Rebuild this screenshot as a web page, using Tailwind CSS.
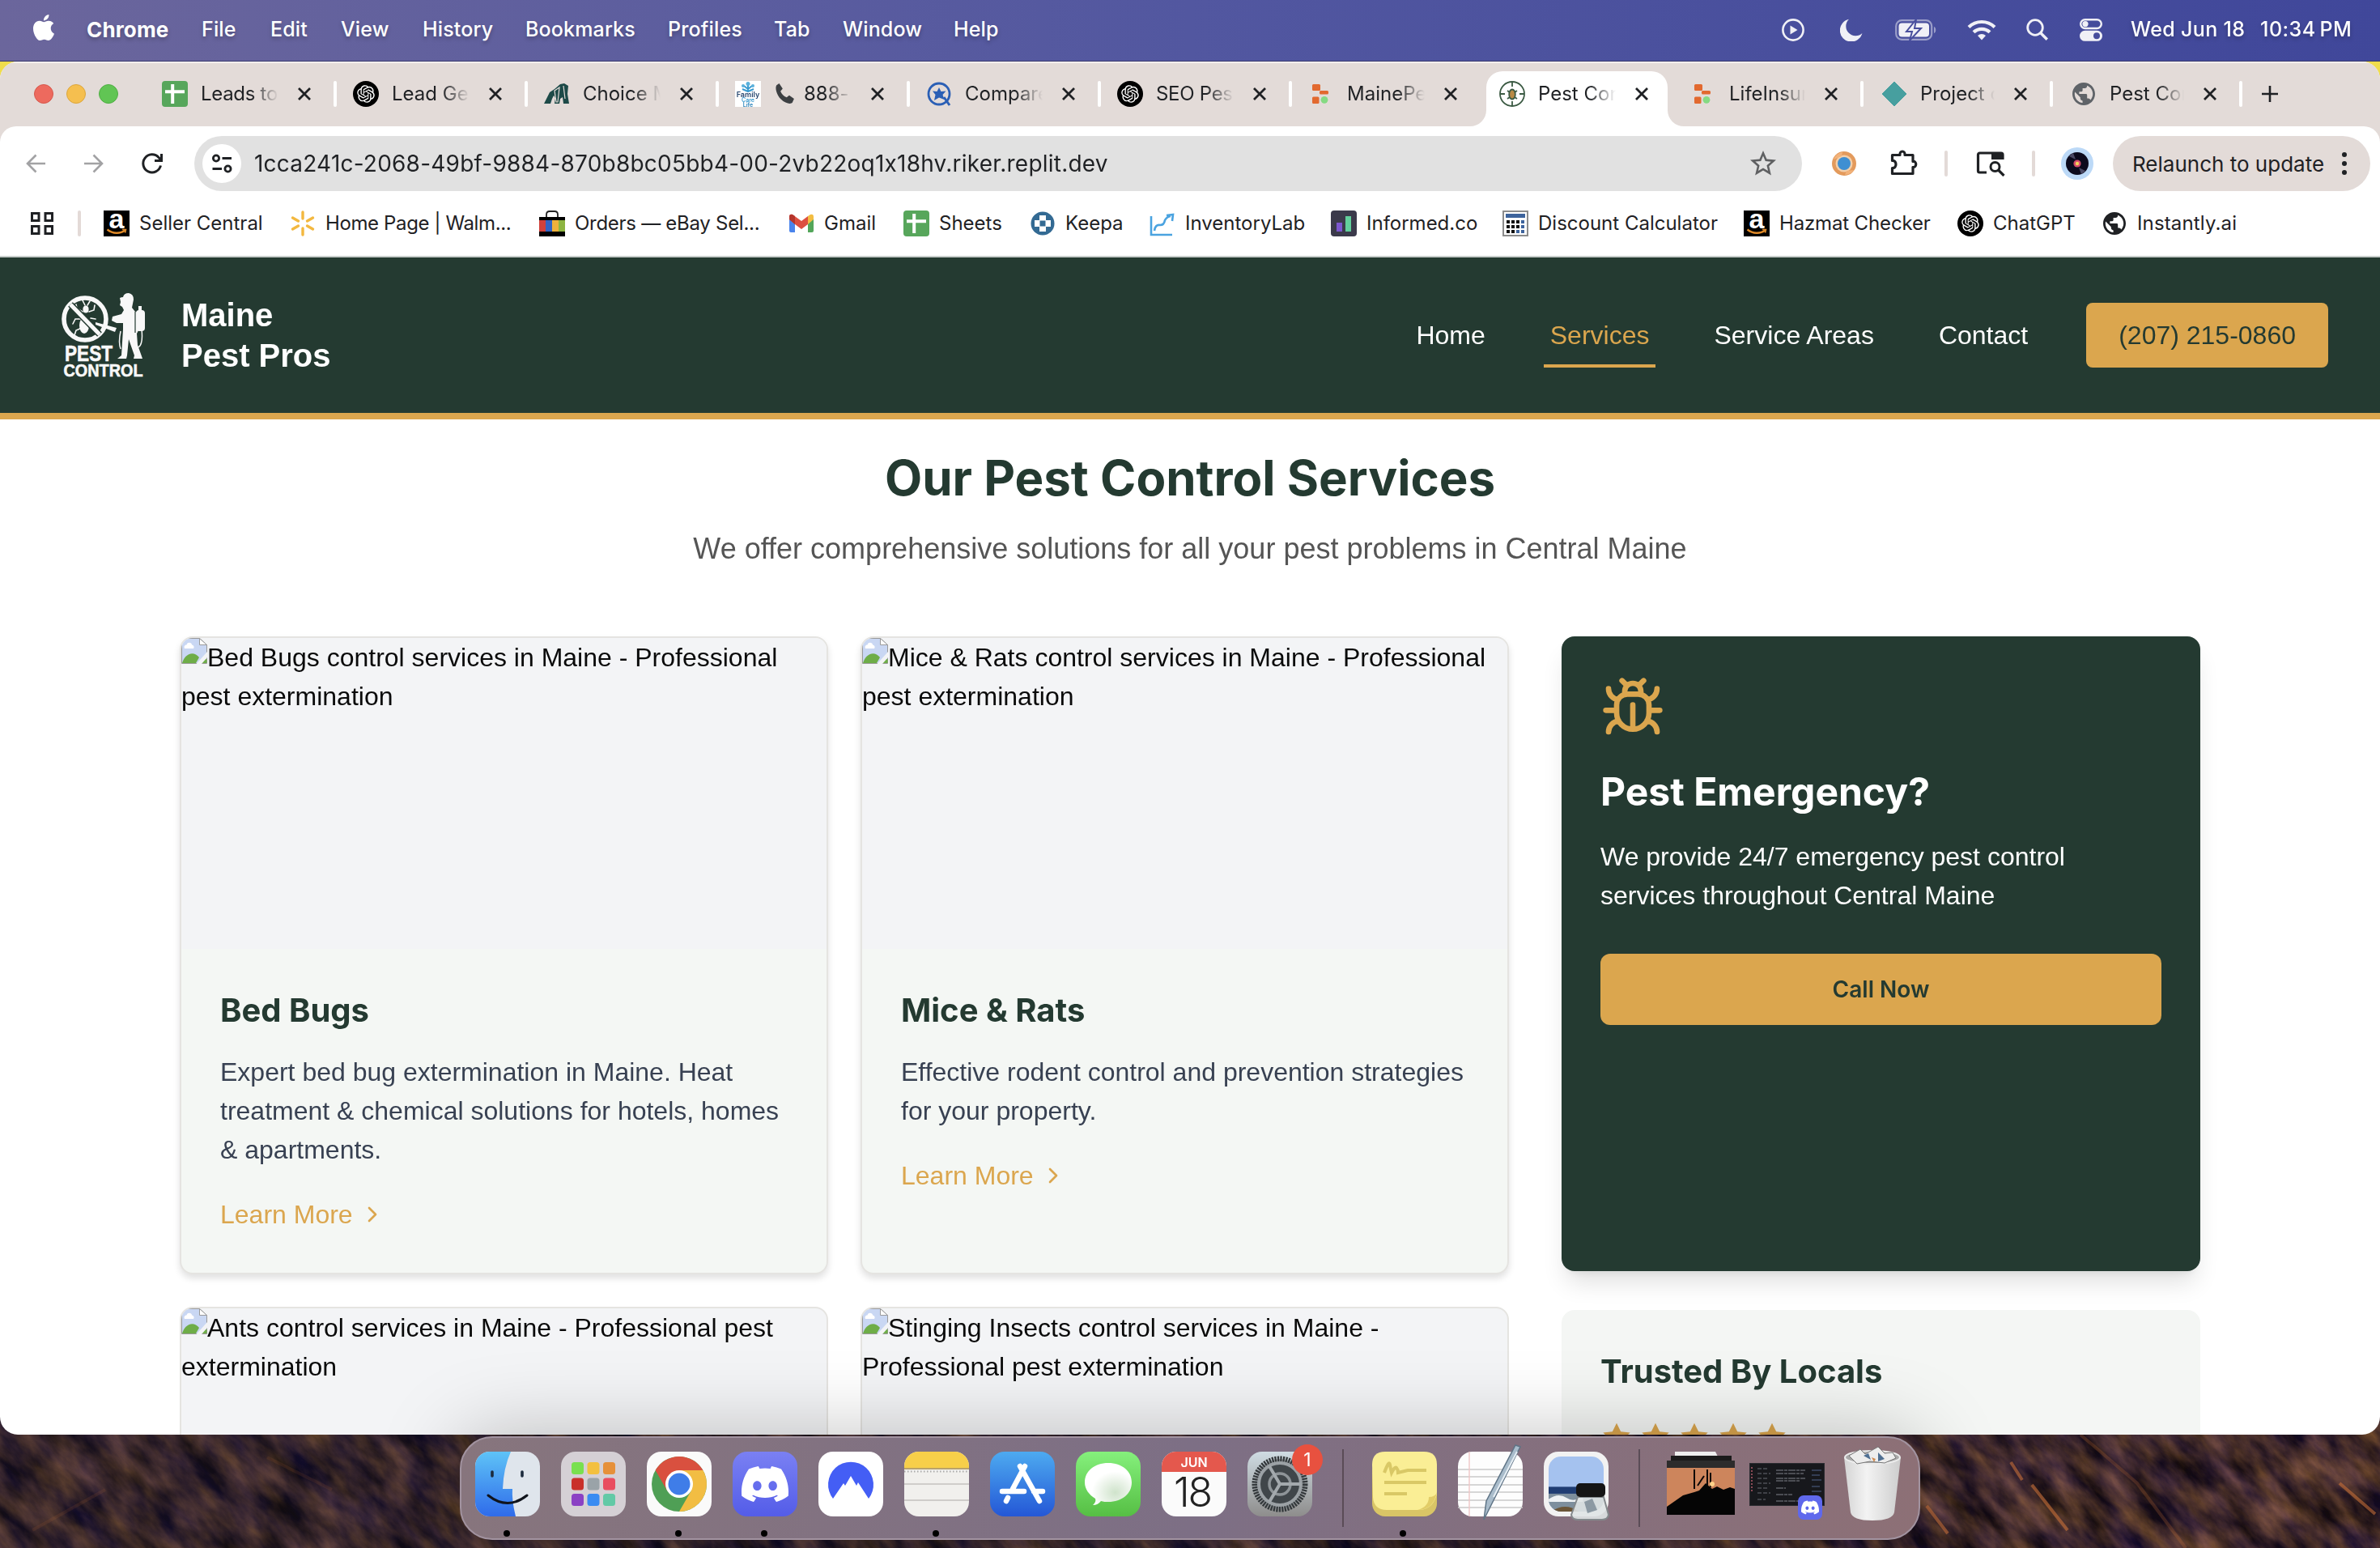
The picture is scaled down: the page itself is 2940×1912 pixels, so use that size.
<!DOCTYPE html>
<html lang="en">
<head>
<meta charset="utf-8">
<title>Maine Pest Pros</title>
<script src="https://cdn.jsdelivr.net/npm/@tailwindcss/browser@4"></script>
</head>
<body class="w-[2940px] h-[1912px] overflow-hidden bg-[#33262b] font-[Inter,sans-serif] text-[#1f2124] [font-feature-settings:'calt'_0]">

<!-- Shared icon symbols -->
<svg class="hidden">
  <symbol id="openai" viewBox="0 0 32 32"><circle cx="16" cy="16" r="16" fill="#000"/><path transform="translate(5.2 5.2) scale(.9)" fill="#fff" d="M22.2819 9.8211a5.9847 5.9847 0 0 0-.5157-4.9108 6.0462 6.0462 0 0 0-6.5098-2.9A6.0651 6.0651 0 0 0 4.9807 4.1818a5.9847 5.9847 0 0 0-3.9977 2.9 6.0462 6.0462 0 0 0 .7427 7.0966 5.98 5.98 0 0 0 .511 4.9107 6.051 6.051 0 0 0 6.5146 2.9001A5.9847 5.9847 0 0 0 13.2599 24a6.0557 6.0557 0 0 0 5.7718-4.2058 5.9894 5.9894 0 0 0 3.9977-2.9001 6.0557 6.0557 0 0 0-.7475-7.0729zm-9.022 12.6081a4.4755 4.4755 0 0 1-2.8764-1.0408l.1419-.0804 4.7783-2.7582a.7948.7948 0 0 0 .3927-.6813v-6.7369l2.02 1.1686a.071.071 0 0 1 .038.052v5.5826a4.504 4.504 0 0 1-4.4945 4.4944zm-9.6607-4.1254a4.4708 4.4708 0 0 1-.5346-3.0137l.142.0852 4.783 2.7582a.7712.7712 0 0 0 .7806 0l5.8428-3.3685v2.3324a.0804.0804 0 0 1-.0332.0615L9.74 19.9502a4.4992 4.4992 0 0 1-6.1408-1.6464zM2.3408 7.8956a4.485 4.485 0 0 1 2.3655-1.9728V11.6a.7664.7664 0 0 0 .3879.6765l5.8144 3.3543-2.0201 1.1685a.0757.0757 0 0 1-.071 0l-4.8303-2.7865A4.504 4.504 0 0 1 2.3408 7.872zm16.5963 3.8558L13.1038 8.364 15.1192 7.2a.0757.0757 0 0 1 .071 0l4.8303 2.7913a4.4944 4.4944 0 0 1-.6765 8.1042v-5.6772a.79.79 0 0 0-.407-.667zm2.0107-3.0231l-.142-.0852-4.7735-2.7818a.7759.7759 0 0 0-.7854 0L9.409 9.2297V6.8974a.0662.0662 0 0 1 .0284-.0615l4.8303-2.7866a4.4992 4.4992 0 0 1 6.6802 4.66zM8.3065 12.863l-2.02-1.1638a.0804.0804 0 0 1-.038-.0567V6.0742a4.4992 4.4992 0 0 1 7.3757-3.4537l-.142.0805L8.704 5.459a.7948.7948 0 0 0-.3927.6813zm1.0976-2.3654l2.602-1.4998 2.6069 1.4998v2.9994l-2.5974 1.4997-2.6067-1.4997Z"/></symbol>
  <symbol id="sheets" viewBox="0 0 32 32"><rect width="32" height="32" rx="4" fill="#57a65b"/><path d="M13.2 4v24M4 13.2h24" stroke="#fff" stroke-width="4"/></symbol>
  <symbol id="globe" viewBox="2 2 20 20"><path fill="currentColor" d="M12 2C6.48 2 2 6.48 2 12s4.48 10 10 10 10-4.48 10-10S17.52 2 12 2zm-1 17.93c-3.95-.49-7-3.85-7-7.93 0-.62.08-1.21.21-1.79L9 15v1c0 1.1.9 2 2 2v1.93zm6.9-2.54c-.26-.81-1-1.39-1.9-1.39h-1v-3c0-.55-.45-1-1-1H8v-2h2c.55 0 1-.45 1-1V7h2c1.1 0 2-.9 2-2v-.41c2.93 1.19 5 4.06 5 7.41 0 2.08-.8 3.97-2.1 5.39z"/></symbol>
  <symbol id="blocks" viewBox="0 0 32 32"><rect x="5" y="4" width="10" height="8" rx="1.5" fill="#e2692f"/><rect x="14" y="12" width="11" height="4.500" rx="1.500" fill="#e2692f"/><rect x="5" y="19.500" width="8.500" height="8.500" rx="1.500" fill="#e2692f"/><circle cx="20" cy="23.300" r="4.400" fill="#85da83"/></symbol>
  <symbol id="close" viewBox="0 0 20 20"><path d="M3 3l14 14M17 3L3 17" stroke="#1f2124" stroke-width="2.800" fill="none"/></symbol>
  <symbol id="amazon" viewBox="0 0 32 32"><rect width="32" height="32" fill="#000"/><text x="16" y="22" text-anchor="middle" font-family="Liberation Sans" font-weight="700" font-size="34" fill="#fff">a</text><path d="M4.500 23.500c7 5.600 16 5.600 22 .8" stroke="#e08a28" stroke-width="2.400" fill="none"/><path d="M23 23.500h4.500l-1 4" stroke="#e08a28" stroke-width="1.600" fill="none"/></symbol>
  <symbol id="discord" viewBox="0 0 24 24"><path fill="#fff" d="M20.317 4.3698a19.7913 19.7913 0 00-4.8851-1.5152.0741.0741 0 00-.0785.0371c-.211.3753-.4447.8648-.6083 1.2495-1.8447-.2762-3.68-.2762-5.4868 0-.1636-.3933-.4058-.8742-.6177-1.2495a.077.077 0 00-.0785-.037 19.7363 19.7363 0 00-4.8852 1.515.0699.0699 0 00-.0321.0277C.5334 9.0458-.319 13.5799.0992 18.0578a.0824.0824 0 00.0312.0561c2.0528 1.5076 4.0413 2.4228 5.9929 3.0294a.0777.0777 0 00.0842-.0276c.4616-.6304.8731-1.2952 1.226-1.9942a.076.076 0 00-.0416-.1057c-.6528-.2476-1.2743-.5495-1.8722-.8923a.077.077 0 01-.0076-.1277c.1258-.0943.2517-.1923.3718-.2914a.0743.0743 0 01.0776-.0105c3.9278 1.7933 8.18 1.7933 12.0614 0a.0739.0739 0 01.0785.0095c.1202.099.246.1981.3728.2924a.077.077 0 01-.0066.1276 12.2986 12.2986 0 01-1.873.8914.0766.0766 0 00-.0407.1067c.3604.698.7719 1.3628 1.225 1.9932a.076.076 0 00.0842.0286c1.961-.6067 3.9495-1.5219 6.0023-3.0294a.077.077 0 00.0313-.0552c.5004-5.177-.8382-9.6739-3.5485-13.6604a.061.061 0 00-.0312-.0286zM8.02 15.3312c-1.1825 0-2.1569-1.0857-2.1569-2.419 0-1.3332.9555-2.4189 2.157-2.4189 1.2108 0 2.1757 1.0952 2.1568 2.419 0 1.3332-.9555 2.4189-2.1569 2.4189zm7.9748 0c-1.1825 0-2.1569-1.0857-2.1569-2.419 0-1.3332.9554-2.4189 2.1569-2.4189 1.2108 0 2.1757 1.0952 2.1568 2.419 0 1.3332-.946 2.4189-2.1568 2.4189Z"/></symbol>
  <symbol id="broken" viewBox="0 0 32 32"><path d="M.5 .5H22.500l9 8V31.500H.5z" fill="#c9d7f3" stroke="#9a9a9a"/><path d="M22.500 .5v8h9z" fill="#fff" stroke="#9a9a9a"/><path d="M4 13c-1.500-3.500 1.500-5 2.500-4.500 1-4 6.500-3 6.500 0 3 .5 3 3.500 2 4.500z" fill="#fff"/><path d="M1 31c4-13 15-15 21-7l-4 7z" fill="#6ead48"/><path d="M24 31l6-6 1.500 2V31z" fill="#6ead48"/><path d="M18.500 32L32 17v7l-7 8z" fill="#f3f4f6"/></symbol>
  <symbol id="star" viewBox="0 0 24 24"><polygon points="12 2.300 15.090 8.560 22 9.270 17 14.140 18.180 21.020 12 17.770 5.820 21.020 7 14.140 2 9.270 8.910 8.560" fill="#dba64e"/></symbol>
</svg>

<!-- Wallpaper -->
<svg class="absolute left-0 top-0" width="2940" height="1912">
  <defs>
    <filter id="city" x="0" y="0" width="100%" height="100%" color-interpolation-filters="sRGB"><feTurbulence type="fractalNoise" baseFrequency=".032 .02" numOctaves="6" seed="11"/><feColorMatrix values=".8 0 0 0 -.17  .55 0 0 0 -.12  .25 0 .25 0 -.08  0 0 0 0 1"/></filter>
    <linearGradient id="wl" x1="0" x2="1"><stop offset="0" stop-color="#2e2026" stop-opacity=".4"/><stop offset=".5" stop-color="#261d2c" stop-opacity=".3"/><stop offset="1" stop-color="#5a3025" stop-opacity=".2"/></linearGradient>
  </defs>
  <rect width="2940" height="200" fill="#efdc4c"/>
  <g transform="translate(0 1740)">
    <g transform="skewX(35)"><rect x="-200" width="3300" height="180" filter="url(#city)"/></g>
    <rect width="2940" height="180" fill="url(#wl)"/>
    <g stroke="#c8713a" stroke-width="4" opacity=".6"><path d="M2380 120l26 34M2510 94l44 56M2484 66l14 22M2890 92l44 38"/><path d="M2570 32l70 60 60 80" opacity=".4" fill="none"/><path d="M40 150l90-50M330 60l80 40" opacity=".2"/></g>
  </g>
</svg>

<div class="relative flex flex-col w-[2940px]">
  <!-- Menu bar -->
  <div class="h-[76px] flex items-center justify-between bg-linear-to-r from-[#6b669c] via-[#5257a0] to-[#40479a] border-b border-[#393a6e] text-white text-[25px] tracking-[.15px] whitespace-nowrap font-medium pl-10 pr-[34px] [text-shadow:0_3px_5px_rgba(0,0,0,.25)]">
    <div class="flex items-center pb-0.5">
      <svg class="w-[28px] h-[32px] mr-[39px] mb-1.5" viewBox="2 0 20 24"><path fill="#fff" d="M12.152 6.896c-.948 0-2.415-1.078-3.96-1.04-2.040.027-3.910 1.183-4.961 3.014-2.117 3.675-.546 9.103 1.519 12.090 1.013 1.454 2.208 3.090 3.792 3.039 1.520-.065 2.090-.987 3.935-.987 1.831 0 2.350.987 3.960.948 1.637-.026 2.676-1.480 3.676-2.948 1.156-1.688 1.636-3.325 1.662-3.415-.039-.013-3.182-1.221-3.220-4.857-.026-3.040 2.480-4.494 2.597-4.559-1.429-2.090-3.623-2.324-4.390-2.376-2-.156-3.675 1.090-4.610 1.090zM15.530 3.830c.843-1.012 1.400-2.427 1.245-3.830-1.207.052-2.662.805-3.532 1.818-.780.896-1.454 2.338-1.273 3.714 1.338.104 2.715-.688 3.559-1.701"/></svg>
      <div class="w-[142px] text-[26px] font-bold">Chrome</div>
      <div class="w-[85px]">File</div>
      <div class="w-[87px]">Edit</div>
      <div class="w-[101px]">View</div>
      <div class="w-[127px]">History</div>
      <div class="w-[176px]">Bookmarks</div>
      <div class="w-[131px]">Profiles</div>
      <div class="w-[85px]">Tab</div>
      <div class="w-[137px]">Window</div>
      <div>Help</div>
    </div>
    <div class="flex items-center pb-0.5">
      <svg class="w-[28px] h-[28px] mr-[44px]" viewBox="0 0 28 28"><circle cx="14" cy="14" r="12.600" fill="none" stroke="#f0f0f6" stroke-width="2.600"/><path d="M10.500 8.500l9 5.500-9 5.500z" fill="#f0f0f6"/></svg>
      <svg class="w-[28px] h-[28px] mr-[40px]" viewBox="0 0 28 28"><path d="M11 .8A14 14 0 1 0 27.400 18 11.500 11.500 0 0 1 11 .8z" fill="#f0f0f6"/></svg>
      <svg class="w-[52px] h-[26px] mr-[37px]" viewBox="0 0 52 26"><rect x="1.200" y="1.200" width="44" height="23.600" rx="7" fill="none" stroke="#f0f0f6" stroke-opacity=".5" stroke-width="2.200"/><rect x="4.500" y="4.500" width="37.500" height="17" rx="4" fill="#f0f0f6"/><path d="M48 9c3 1 3 7 0 8z" fill="#f0f0f6" opacity=".5"/><path d="M26 0L14 15h7l-3 11 14-15h-8z" fill="#f0f0f6" stroke="#484e9d" stroke-width="2"/></svg>
      <svg class="w-[36px] h-[26px] mr-[37px]" viewBox="0 0 36 26" fill="none" stroke="#f0f0f6" stroke-width="4.200"><path d="M2 9.500a23 23 0 0 1 32 0M8 15.800a14.500 14.500 0 0 1 20 0"/><path d="M18 25.500l-5-5.500a7.500 7.500 0 0 1 10 0z" fill="#f0f0f6" stroke="none"/></svg>
      <svg class="w-[27px] h-[27px] mr-[39px]" viewBox="0 0 27 27" fill="none" stroke="#f0f0f6" stroke-width="2.800"><circle cx="11" cy="11" r="9.300"/><path d="M17.800 17.800l8 8" stroke-width="3.400"/></svg>
      <svg class="w-[28px] h-[28px] mr-[35px]" viewBox="0 0 28 28"><rect x="1.200" y="1.200" width="25.600" height="10.800" rx="5.400" fill="none" stroke="#f0f0f6" stroke-width="2.400"/><circle cx="7" cy="6.600" r="3.600" fill="#f0f0f6"/><rect y="14.800" width="28" height="13" rx="6.500" fill="#f0f0f6"/><circle cx="21" cy="21.300" r="4" fill="#474d9c"/></svg>
      <div class="w-[160px] tracking-[.35px]">Wed Jun 18</div>
      <div class="w-[114px] tracking-[.5px]">10:34&#8201;PM</div>
    </div>
  </div>

  <!-- Browser window -->
  <div class="h-[1696px] rounded-[22px] overflow-hidden bg-white flex flex-col">
    <!-- Tab strip -->
    <div class="h-[80px] shrink-0 bg-[#e3dbd8] flex items-center shadow-[inset_0_2px_0_#f3eeed]">
      <div class="w-[180px] pl-[42px] flex gap-4"><div class="size-6 rounded-full bg-[#ed6a5e] border border-[#d6574c]"></div><div class="size-6 rounded-full bg-[#f5bf4f] border border-[#dca63c]"></div><div class="size-6 rounded-full bg-[#61c554] border border-[#4fae43]"></div></div>
      <div class="w-[236px] h-8 flex items-center pl-5 text-[24px]"><svg class="size-8 shrink-0"><use href="#sheets"/></svg><div class="ml-4 w-[96px] overflow-hidden whitespace-nowrap tracking-[-.3px] [mask-image:linear-gradient(to_right,#000_65%,transparent)]">Leads to</div><svg class="size-5 ml-[22px] shrink-0"><use href="#close"/></svg><div class="ml-[26px] w-1 h-8 shrink-0 bg-white rounded-full"></div></div>
      <div class="w-[236px] h-8 flex items-center pl-5 text-[24px]"><svg class="size-8 shrink-0"><use href="#openai"/></svg><div class="ml-4 w-[96px] overflow-hidden whitespace-nowrap [mask-image:linear-gradient(to_right,#000_65%,transparent)]">Lead Ge</div><svg class="size-5 ml-[22px] shrink-0"><use href="#close"/></svg><div class="ml-[26px] w-1 h-8 shrink-0 bg-white rounded-full"></div></div>
      <div class="w-[236px] h-8 flex items-center pl-5 text-[24px]"><svg class="size-8 shrink-0" viewBox="0 0 32 32"><path d="M0 28L7 14l6-4 7-6 5-1 5 3-1 10 2 12h-7l-1-8-3 2-1 6h-6l1-7-2-3-2 4-2 6z" fill="#1d4a48"/><path d="M13 12l6-4-2 18h-2zM24 6l2 16" stroke="#e3dbd8" stroke-width="1.200" fill="none"/></svg><div class="ml-4 w-[96px] overflow-hidden whitespace-nowrap [mask-image:linear-gradient(to_right,#000_65%,transparent)]">Choice M</div><svg class="size-5 ml-[22px] shrink-0"><use href="#close"/></svg><div class="ml-[26px] w-1 h-8 shrink-0 bg-white rounded-full"></div></div>
      <div class="w-[236px] h-8 flex items-center pl-5 text-[24px]"><svg class="size-8 shrink-0" viewBox="0 0 32 32"><rect width="32" height="32" fill="#fff"/><path d="M16 14V3M16 10l-5-4M16 10l5-4M16 13l-7-3M16 13l7-3" stroke="#3a9bd0" stroke-width="2"/><circle cx="16" cy="3.500" r="2.500" fill="#5bb1dc"/><circle cx="10" cy="6" r="2" fill="#5bb1dc"/><circle cx="22" cy="6" r="2" fill="#5bb1dc"/><g font-family="Inter" font-size="9" font-weight="600" text-anchor="middle"><text x="16" y="20" fill="#27466f">Family</text><text x="16" y="26" fill="#3a9bd0" font-size="7">Care</text><text x="16" y="31.500" fill="#2f86bd" font-size="7">Life</text></g></svg><div class="ml-4 w-[96px] flex items-center overflow-hidden whitespace-nowrap [mask-image:linear-gradient(to_right,#000_65%,transparent)]"><svg class="w-[26px] h-[26px] mr-[11px] shrink-0" viewBox="0 0 24 24"><path fill="#3d4043" d="M3 2l3-2 4 6-2.500 3c1.500 3.500 3.500 5.500 7 7l3-2.500 5.500 4L21 22c-2 2-8 1-13-4S1 5 3 2z"/></svg>888-</div><svg class="size-5 ml-[22px] shrink-0"><use href="#close"/></svg><div class="ml-[26px] w-1 h-8 shrink-0 bg-white rounded-full"></div></div>
      <div class="w-[236px] h-8 flex items-center pl-5 text-[24px]"><svg class="size-8 shrink-0" viewBox="0 0 32 32"><circle cx="16" cy="16" r="13" fill="none" stroke="#2b5fb5" stroke-width="2.800"/><path d="M22 20l7 10" stroke="#2b5fb5" stroke-width="3"/><path d="M16 8l2.500 5 6-.5-4 4.500 2 6-6.500-2.500L10 24l1.500-7L8 12.500l5.500.5z" fill="#2b5fb5"/></svg><div class="ml-4 w-[96px] overflow-hidden whitespace-nowrap [mask-image:linear-gradient(to_right,#000_65%,transparent)]">Compare</div><svg class="size-5 ml-[22px] shrink-0"><use href="#close"/></svg><div class="ml-[26px] w-1 h-8 shrink-0 bg-white rounded-full"></div></div>
      <div class="w-[236px] h-8 flex items-center pl-5 text-[24px]"><svg class="size-8 shrink-0"><use href="#openai"/></svg><div class="ml-4 w-[96px] overflow-hidden whitespace-nowrap tracking-[-.3px] [mask-image:linear-gradient(to_right,#000_65%,transparent)]">SEO Pes</div><svg class="size-5 ml-[22px] shrink-0"><use href="#close"/></svg><div class="ml-[26px] w-1 h-8 shrink-0 bg-white rounded-full"></div></div>
      <div class="w-[236px] h-8 flex items-center pl-5 text-[24px]"><svg class="size-8 shrink-0"><use href="#blocks"/></svg><div class="ml-4 w-[96px] overflow-hidden whitespace-nowrap [mask-image:linear-gradient(to_right,#000_65%,transparent)]">MainePe</div><svg class="size-5 ml-[22px] shrink-0"><use href="#close"/></svg></div>
      <div class="w-[236px] h-20 relative">
        <svg class="absolute left-[-20px] top-0" width="272" height="80" viewBox="0 0 272 80"><path d="M0 80h4a20 20 0 0 0 20-20V32a20 20 0 0 1 20-20h184a20 20 0 0 1 20 20v28a20 20 0 0 0 20 20h4z" fill="#fff"/></svg>
        <div class="relative h-20 flex items-center pl-5 text-[24px]"><svg class="size-8 shrink-0" viewBox="0 0 32 32" fill="none" stroke="#3b5a43" stroke-width="1.800"><circle cx="16" cy="16" r="15"/><path d="M16 1v6M16 25v6M1 16h6M25 16h6"/><path d="M10 12l3 2M10 22l3-2M22 12l-3 2M22 22l-3-2"/><ellipse cx="16" cy="16.500" rx="3.800" ry="6" fill="#b98a45"/></svg><div class="ml-4 w-[96px] overflow-hidden whitespace-nowrap [mask-image:linear-gradient(to_right,#000_65%,transparent)]">Pest Con</div><svg class="size-5 ml-[22px] shrink-0"><use href="#close"/></svg></div>
      </div>
      <div class="w-[234px] h-8 flex items-center pl-5 text-[24px]"><svg class="size-8 shrink-0"><use href="#blocks"/></svg><div class="ml-4 w-[97px] overflow-hidden whitespace-nowrap [mask-image:linear-gradient(to_right,#000_65%,transparent)]">LifeInsur</div><svg class="size-5 ml-[22px] shrink-0"><use href="#close"/></svg><div class="ml-[26px] w-1 h-8 shrink-0 bg-white rounded-full"></div></div>
      <div class="w-[234px] h-8 flex items-center pl-[22px] text-[24px]"><svg class="size-8 shrink-0" viewBox="0 0 32 32"><path d="M16 1l15 15-15 15L1 16z" fill="#479f9f" stroke="#479f9f" stroke-linejoin="round"/></svg><div class="ml-4 w-[96px] overflow-hidden whitespace-nowrap [mask-image:linear-gradient(to_right,#000_65%,transparent)]">Project o</div><svg class="size-5 ml-[22px] shrink-0"><use href="#close"/></svg><div class="ml-[26px] w-1 h-8 shrink-0 bg-white rounded-full"></div></div>
      <div class="w-[234px] h-8 flex items-center pl-[22px] text-[24px]"><svg class="size-7 mx-0.5 shrink-0 text-[#5f6368]"><use href="#globe"/></svg><div class="ml-4 w-[96px] overflow-hidden whitespace-nowrap [mask-image:linear-gradient(to_right,#000_65%,transparent)]">Pest Con</div><svg class="size-5 ml-[22px] shrink-0"><use href="#close"/></svg><div class="ml-[26px] w-1 h-8 shrink-0 bg-white rounded-full"></div></div>
      <svg class="size-5 ml-[24px]" viewBox="0 0 20 20"><path d="M10 0v20M0 10h20" stroke="#1f2124" stroke-width="2.600"/></svg>
    </div>

    <!-- Toolbar -->
    <div class="bg-[#e3dbd8] shrink-0"><div class="h-[92px] bg-white rounded-t-[20px] flex items-center">
      <svg class="w-6 h-6 ml-8" viewBox="0 0 24 24" fill="none" stroke="#a2a2a4" stroke-width="2.600"><path d="M24 12H2M12.500 1.500L2 12l10.500 10.500"/></svg>
      <svg class="w-6 h-6 ml-12" viewBox="0 0 24 24" fill="none" stroke="#a2a2a4" stroke-width="2.600"><path d="M0 12h22M11.500 1.500L22 12 11.500 22.500"/></svg>
      <svg class="w-7 h-7 ml-[46px]" viewBox="0 0 28 28" fill="none" stroke="#1f2124" stroke-width="3"><path d="M24.500 16.500A11 11 0 1 1 22 6.500L25 9.500"/><path d="M25.500 2v8.500H17"/></svg>
      <div class="ml-[38px] w-[1986px] h-[68px] rounded-full bg-[#e1e1e1] flex items-center pl-[10px] pr-8">
        <div class="size-12 rounded-full bg-white flex items-center justify-center"><svg class="w-[26px] h-[24px]" viewBox="0 0 26 24" fill="none" stroke="#1f2124" stroke-width="2.800"><circle cx="6" cy="5.500" r="3.600"/><path d="M13.500 5.500H25M1.500 18.500H13"/><circle cx="20.500" cy="18.500" r="3.600"/></svg></div>
        <div class="ml-4 text-[28px] tracking-[.22px] flex-1">1cca241c-2068-49bf-9884-870b8bc05bb4-00-2vb22oq1x18hv.riker.replit.dev</div>
        <svg class="size-8" viewBox="2 2 20 20"><path fill="#5f6062" d="M22 9.240l-7.190-.62L12 2 9.190 8.630 2 9.240l5.460 4.730L5.820 21 12 17.270 18.180 21l-1.630-7.030L22 9.240zM12 15.400l-3.760 2.270 1-4.280-3.320-2.880 4.380-.38L12 6.100l1.710 4.040 4.380.38-3.320 2.880 1 4.280L12 15.400z"/></svg>
      </div>
      <svg class="size-8 ml-9" viewBox="0 0 32 32"><circle cx="16" cy="16" r="15" fill="#e39a5c"/><circle cx="16" cy="16" r="10.500" fill="#f3cfa9"/><circle cx="16" cy="16" r="8" fill="#3f8fd2"/><path d="M3 11a14 14 0 0 1 11-9l-1 5zM28 24a14 14 0 0 1-11 6l2-5z" fill="#f2b27a"/></svg>
      <svg class="w-[34px] h-[34px] ml-[41px] mb-1" viewBox="0 0 34 34"><path d="M2.500 8.500h9.500c-1-6 7-6 6 0h10v8c5-1 5 7.500 0 7V31.500H2.500v-7c6 1 6-10 0-9z" fill="none" stroke="#1f2124" stroke-width="3.200" stroke-linejoin="round"/></svg>
      <div class="w-1 h-8 rounded-full bg-[#e3dad7] ml-[33px]"></div>
      <svg class="w-[36px] h-[32px] ml-[35px]" viewBox="0 0 36 32"><path d="M13 27H4.500a2 2 0 0 1-2-2V5a2 2 0 0 1 2-2H31a2 2 0 0 1 2 2v6" fill="none" stroke="#1f2124" stroke-width="3.200"/><path d="M19 2h14v9H19z" fill="#1f2124"/><circle cx="23.500" cy="20" r="5.500" fill="#fff" stroke="#1f2124" stroke-width="3"/><path d="M27.500 24l7 7" stroke="#1f2124" stroke-width="3.200"/></svg>
      <div class="w-1 h-8 rounded-full bg-[#e3dad7] ml-[33px]"></div>
      <svg class="size-10 ml-[32px]" viewBox="0 0 40 40"><circle cx="20" cy="20" r="20" fill="#bcd9f7"/><circle cx="20" cy="20" r="14" fill="#0c0a1d"/><path d="M10 11a14 14 0 0 1 5-4l3 8zM30 29a14 14 0 0 1-5 4l-3-8z" fill="#4a4864"/><circle cx="20" cy="20" r="4.600" fill="#d64a6c"/><circle cx="20" cy="20" r="2.200" fill="#f4d35a"/></svg>
      <div class="ml-[24px] w-[318px] h-[68px] rounded-full bg-[#e3dbd8] flex items-center pl-6 pr-[29px] justify-between text-[26px]"><span>Relaunch to update</span><div class="flex flex-col gap-[5px]"><div class="size-[6px] rounded-full bg-[#1f2124]"></div><div class="size-[6px] rounded-full bg-[#1f2124]"></div><div class="size-[6px] rounded-full bg-[#1f2124]"></div></div></div>
    </div></div>

    <!-- Bookmarks bar -->
    <div class="h-[70px] shrink-0 bg-white border-b-2 border-[#c8cecb] pb-3 flex items-center text-[24px] whitespace-nowrap">
      <svg class="size-7 ml-[38px]" viewBox="0 0 28 28" fill="none" stroke="#1f2124" stroke-width="3"><rect x="1.500" y="1.500" width="8.500" height="9"/><rect x="18" y="1.500" width="8.500" height="9"/><rect x="1.500" y="17.500" width="8.500" height="9"/><rect x="18" y="17.500" width="8.500" height="9"/></svg>
      <div class="w-1 h-8 ml-[30px] mr-7 rounded-full bg-[#e3dad7]"></div>
      <div class="w-[230px] flex items-center gap-3"><svg class="size-8"><use href="#amazon"/></svg><span>Seller Central</span></div>
      <div class="w-[308px] flex items-center gap-3"><svg class="size-8" viewBox="0 0 32 32" stroke="#f3b83f" stroke-width="3.400" stroke-linecap="round"><path d="M16 2v8M16 22v8M3.500 9l7 4M28.500 9l-7 4M3.500 23l7-4M28.500 23l-7-4"/></svg><span class="tracking-[-.38px]">Home Page | Walm...</span></div>
      <div class="w-[308px] flex items-center gap-3"><svg class="size-8" viewBox="0 0 32 32"><path d="M9 9V5q0-4 4-4h6q4 0 4 4v4" fill="none" stroke="#222" stroke-width="1.800"/><path d="M0 8h32v5H0zM0 26h32v6H0z" fill="#000"/><path d="M0 12h8v14H0z" fill="#d0413c"/><path d="M8 12h8v14H8z" fill="#3163c5"/><path d="M16 12h8v14h-8z" fill="#efb13b"/><path d="M24 12h8v14h-8z" fill="#8db541"/></svg><span class="tracking-[-.28px]">Orders — eBay Sel...</span></div>
      <div class="w-[142px] flex items-center gap-3"><svg class="size-8" viewBox="0 0 32 32"><path d="M1 8v17q0 2 2 2h5V13z" fill="#4a84ec"/><path d="M31 8v17q0 2-2 2h-5V13z" fill="#53a65a"/><path d="M24 7l3-2q4-1 4 3v3l-7 6z" fill="#f3bd42"/><path d="M1 11V8q0-4 4-3l11 8 8-6v10l-8 6-8-6z" fill="#dc4f40"/><path d="M1 11V8q0-4 4-3l3 2v10z" fill="#b5352c"/></svg><span>Gmail</span></div>
      <div class="w-[156px] flex items-center gap-3"><svg class="size-8"><use href="#sheets"/></svg><span>Sheets</span></div>
      <div class="w-[148px] flex items-center gap-3"><svg class="size-8" viewBox="0 0 32 32"><circle cx="16" cy="16" r="14.500" fill="#336a93"/><path d="M12 6h8v6h6v8h-6v6h-8v-6H6v-8h6z" fill="#fff"/><path d="M12.500 12.500h7v7h-7z" fill="#336a93"/></svg><span>Keepa</span></div>
      <div class="w-[224px] flex items-center gap-3"><svg class="size-8" viewBox="0 0 32 32" fill="none" stroke="#4aa3e0" stroke-width="2.600"><path d="M2 7v23h26M6 25q1-8 7-7 5 0 6-6 2-4 7-5M21 6l8-1-1 8"/></svg><span>InventoryLab</span></div>
      <div class="w-[212px] flex items-center gap-3"><svg class="size-8" viewBox="0 0 32 32"><rect width="32" height="32" rx="4" fill="#3b3a4b"/><rect x="7" y="15" width="7" height="11" fill="#7c56cf"/><rect x="18" y="7" width="7" height="19" fill="#62cf9c"/></svg><span>Informed.co</span></div>
      <div class="w-[298px] flex items-center gap-3"><svg class="size-8" viewBox="0 0 32 32"><rect x="1" y="1" width="30" height="30" fill="#fff" stroke="#8c8c8c" stroke-width="2"/><rect x="4" y="4" width="24" height="5" fill="#3d639c"/><g fill="#111"><path d="M5 12h4v4H5zM11 12h4v4h-4zM17 12h4v4h-4zM5 18h4v4H5zM11 18h4v4h-4zM17 18h4v4h-4zM5 24h4v4H5zM11 24h4v4h-4z"/></g><path d="M23 12h4v4h-4zM23 18h4v4h-4zM17 24h4v4h-4zM23 24h4v4h-4z" fill="#3d639c"/></svg><span>Discount Calculator</span></div>
      <div class="w-[264px] flex items-center gap-3"><svg class="size-8"><use href="#amazon"/></svg><span class="tracking-[-.15px]">Hazmat Checker</span></div>
      <div class="w-[178px] flex items-center gap-3"><svg class="size-8"><use href="#openai"/></svg><span>ChatGPT</span></div>
      <div class="flex items-center gap-[14px]"><svg class="size-7 ml-0.5 text-[#1f2124]"><use href="#globe"/></svg><span class="tracking-[.15px]">Instantly.ai</span></div>
    </div>

    <!-- Site header -->
    <header class="h-[200px] shrink-0 bg-[#243a31] border-b-8 border-[#dba64e] flex items-center justify-between pl-[72px] pr-16 font-['Liberation_Sans',Arial,sans-serif] text-white">
      <div class="flex items-center">
        <svg class="w-[112px] h-[112px]" viewBox="0 0 112 112">
          <g transform="translate(1 3)">
          <g fill="none" stroke="#f8f8f8" stroke-linecap="round"><circle cx="32" cy="33" r="26" stroke-width="5.600"/><g stroke-width="1.600"><path d="M32 16l-3-6M35 16l3-5M29 24l-7-4-1-5M37 24l6-2 1-6M27 33l-7 0-3 6M39 32l6 1M28 44l-7 3-2 6M38 41l6 2"/></g></g>
          <ellipse cx="33" cy="21" rx="3.600" ry="4.500" fill="#f8f8f8"/><ellipse cx="31" cy="41" rx="6" ry="10" fill="#f8f8f8"/><path d="M14 15l36 37" stroke="#243a31" stroke-width="8"/><path d="M14 15l36 37" stroke="#f8f8f8" stroke-width="5"/></g>
          <g transform="translate(3 3)"><g fill="#f8f8f8"><path d="M73 7q2-1 4-1 1-5 7-5 6 1 6 8l-2 10 4 5 3 1q3 2 2 20l-3 6 1 14 5 14 1 3H90l1-4-7-20-2 20-1 4H70l5-4 2-32v-8l-8 0-6-3 1-5 11-3 3-5-2-4-3-2 1-4z"/><rect x="93" y="22" width="11" height="26" rx="4"/><path d="M96 17h4v6h-4z"/><path d="M43 37l26 7-2 5-24-9z"/></g>
          <path d="M92 24l0 26" stroke="#243a31" stroke-width="1.200"/>
          <path d="M74 48q-3 14 0 22M100 46q2 18-4 22" stroke="#f8f8f8" stroke-width="1.500" fill="none"/></g>
          <g font-family="Liberation Sans" font-weight="700" fill="#f8f8f8" stroke="#f8f8f8" stroke-width=".6"><text x="8" y="88" font-size="27" textLength="59" lengthAdjust="spacingAndGlyphs">PEST</text><text x="6.500" y="107" font-size="21.500" textLength="98" lengthAdjust="spacingAndGlyphs">CONTROL</text></g>
        </svg>
        <div class="ml-[40px] text-[40px] leading-[50px] font-bold">Maine<br>Pest Pros</div>
      </div>
      <nav class="flex items-center gap-16 text-[32px] leading-[48px]">
        <a class="px-2 pt-4 pb-3 border-b-4 border-transparent">Home</a>
        <a class="px-2 pt-4 pb-3 border-b-4 border-[#dba64e] text-[#dba64e]">Services</a>
        <a class="px-2 pt-4 pb-3 border-b-4 border-transparent">Service Areas</a>
        <a class="px-2 pt-4 pb-3 border-b-4 border-transparent">Contact</a>
        <a class="px-10 py-4 rounded-lg bg-[#dba64e] text-[#243a31]">(207) 215-0860</a>
      </nav>
    </header>

    <!-- Page content -->
    <main class="flex flex-col items-center pt-[42px] font-['Liberation_Sans',Arial,sans-serif]">
      <h1 class="font-[Inter,sans-serif] font-bold text-[60px] leading-[60px] text-[#243a31]">Our Pest Control Services</h1>
      <p class="mt-[30px] text-[36px] leading-[56px] text-[#555]">We offer comprehensive solutions for all your pest problems in Central Maine</p>
      <div class="mt-20 w-[2496px] flex items-start">
        <div class="grid grid-cols-[801px_801px] gap-x-10 gap-y-10 text-[32px] leading-[48px]">
          <article class="h-[788px] rounded-2xl border-2 border-[#e5e4e1] bg-[#f4f7f4] overflow-hidden shadow-[0_5px_8px_rgba(0,0,0,.12)]">
            <div class="h-[384px] bg-[#f3f4f6] text-[#0a0a0a] whitespace-nowrap"><svg class="size-8 inline-block align-top"><use href="#broken"/></svg>Bed Bugs control services in Maine - Professional<br>pest extermination</div>
            <div class="p-12"><h3 class="font-[Inter,sans-serif] font-bold text-[40px] leading-[56px] text-[#243a31] mb-6">Bed Bugs</h3>
            <p class="text-[#384152] mb-8 whitespace-nowrap">Expert bed bug extermination in Maine. Heat<br>treatment &amp; chemical solutions for hotels, homes<br>&amp; apartments.</p>
            <a class="flex items-center text-[#dba64e]">Learn More<svg class="size-8 ml-2" viewBox="0 0 24 24" fill="none" stroke="currentColor" stroke-width="2" stroke-linecap="round" stroke-linejoin="round"><path d="m9 18 6-6-6-6"/></svg></a></div>
          </article>
          <article class="h-[788px] rounded-2xl border-2 border-[#e5e4e1] bg-[#f4f7f4] overflow-hidden shadow-[0_5px_8px_rgba(0,0,0,.12)]">
            <div class="h-[384px] bg-[#f3f4f6] text-[#0a0a0a] whitespace-nowrap"><svg class="size-8 inline-block align-top"><use href="#broken"/></svg>Mice &amp; Rats control services in Maine - Professional<br>pest extermination</div>
            <div class="p-12"><h3 class="font-[Inter,sans-serif] font-bold text-[40px] leading-[56px] text-[#243a31] mb-6">Mice &amp; Rats</h3>
            <p class="text-[#384152] mb-8 whitespace-nowrap">Effective rodent control and prevention strategies<br>for your property.</p>
            <a class="flex items-center text-[#dba64e]">Learn More<svg class="size-8 ml-2" viewBox="0 0 24 24" fill="none" stroke="currentColor" stroke-width="2" stroke-linecap="round" stroke-linejoin="round"><path d="m9 18 6-6-6-6"/></svg></a></div>
          </article>
          <article class="h-[788px] rounded-2xl border-2 border-[#e5e4e1] bg-[#f3f4f6] overflow-hidden text-[#0a0a0a] whitespace-nowrap"><svg class="size-8 inline-block align-top"><use href="#broken"/></svg>Ants control services in Maine - Professional pest<br>extermination</article>
          <article class="h-[788px] rounded-2xl border-2 border-[#e5e4e1] bg-[#f3f4f6] overflow-hidden text-[#0a0a0a] whitespace-nowrap"><svg class="size-8 inline-block align-top"><use href="#broken"/></svg>Stinging Insects control services in Maine -<br>Professional pest extermination</article>
        </div>
        <aside class="ml-[65px] w-[789px] flex flex-col gap-12">
          <section class="h-[784px] rounded-2xl bg-[#243a31] text-white p-12 shadow-[0_20px_30px_-6px_rgba(0,0,0,.12),0_8px_12px_-8px_rgba(0,0,0,.1)]">
            <svg class="size-20 mb-8" viewBox="0 0 24 24" fill="none" stroke="#dba64e" stroke-width="2" stroke-linecap="round" stroke-linejoin="round"><path d="m8 2 1.880 1.880M14.120 3.880 16 2M9 7.130v-1a3.003 3.003 0 1 1 6 0v1M12 20c-3.300 0-6-2.700-6-6v-3a4 4 0 0 1 4-4h4a4 4 0 0 1 4 4v3c0 3.300-2.700 6-6 6M12 20v-9M6.530 9C4.600 8.800 3 7.100 3 5M6 13H2M3 21c0-2.100 1.700-3.900 3.800-4M20.970 5c0 2.100-1.600 3.800-3.500 4M22 13h-4M17.200 17c2.100.1 3.800 1.900 3.800 4"/></svg>
            <h3 class="font-[Inter,sans-serif] font-bold text-[48px] leading-[64px] mb-6">Pest Emergency?</h3>
            <p class="text-[32px] leading-[48px] whitespace-nowrap">We provide 24/7 emergency pest control<br>services throughout Central Maine</p>
            <div class="mt-12 h-[88px] rounded-xl bg-[#dba64e] flex items-center justify-center text-[#243a31] font-[Inter,sans-serif] font-semibold text-[28px]">Call Now</div>
          </section>
          <section class="h-[500px] rounded-2xl bg-[#f4f6f4] p-12">
            <h3 class="font-[Inter,sans-serif] font-bold text-[40px] leading-[56px] text-[#243a31] mb-8">Trusted By Locals</h3>
            <div class="flex gap-2"><svg class="size-10"><use href="#star"/></svg><svg class="size-10"><use href="#star"/></svg><svg class="size-10"><use href="#star"/></svg><svg class="size-10"><use href="#star"/></svg><svg class="size-10"><use href="#star"/></svg></div>
          </section>
        </aside>
      </div>
    </main>
  </div>
</div>

<!-- Dock -->
<div class="absolute left-[568px] top-[1774px] w-[1804px] h-[128px] rounded-[40px] border-2 border-[#a293a0] bg-linear-to-r from-[#87757d] via-[#7d6f85] to-[#8d7076] pl-[17px] pt-[17px] flex items-start shadow-[0_0_100px_rgba(0,0,0,.25)]">
  <div class="flex gap-[26px]">
    <div class="relative size-20"><svg viewBox="0 0 80 80" class="size-20"><defs><linearGradient id="f1" x2="0" y2="1"><stop stop-color="#5ec3f7"/><stop offset="1" stop-color="#2f6bea"/></linearGradient><clipPath id="sq"><rect width="80" height="80" rx="18"/></clipPath></defs><g clip-path="url(#sq)"><rect width="80" height="80" fill="#dfe5ec"/><path d="M0 0h44Q35 20 34 46h12Q45 60 50 80H0z" fill="url(#f1)"/><path d="M21 25v5M58 25v5" stroke="#1c2b3d" stroke-width="3.600" stroke-linecap="round"/><path d="M16 54q24 19 48 0" fill="none" stroke="#10141c" stroke-width="3" stroke-linecap="round"/></g></svg><div class="absolute left-[35px] top-[97px] size-2 rounded-full bg-black"></div></div>
    <svg viewBox="0 0 80 80" class="size-20"><rect width="80" height="80" rx="18" fill="#d5d0d5"/><g><rect x="13" y="13" width="15" height="15" rx="3.500" fill="#79e04f"/><rect x="32.500" y="13" width="15" height="15" rx="3.500" fill="#f3c03f"/><rect x="52" y="13" width="15" height="15" rx="3.500" fill="#e6903a"/><rect x="13" y="32.500" width="15" height="15" rx="3.500" fill="#c9302a"/><rect x="32.500" y="32.500" width="15" height="15" rx="3.500" fill="#9aa3a8"/><rect x="52" y="32.500" width="15" height="15" rx="3.500" fill="#e94d60"/><rect x="13" y="52" width="15" height="15" rx="3.500" fill="#8b41c4"/><rect x="32.500" y="52" width="15" height="15" rx="3.500" fill="#3a8bf2"/><rect x="52" y="52" width="15" height="15" rx="3.500" fill="#62c9a6"/></g></svg>
    <div class="relative size-20"><svg viewBox="0 0 80 80" class="size-20"><rect width="80" height="80" rx="18" fill="#fafafa"/><g transform="translate(40 40)"><circle r="34" fill="#4f9f55"/><path d="M-29.400-17A34 34 0 0 1 29.400-17L0-17-14.700 8.500z" fill="#d9503f"/><path d="M29.400-17A34 34 0 0 1 0 34L14.700 8.500 0-17z" fill="#f2bd43"/><circle r="17" fill="#fff"/><circle r="13.500" fill="#3f7de8"/></g></svg><div class="absolute left-[35px] top-[97px] size-2 rounded-full bg-black"></div></div>
    <div class="relative size-20"><div class="size-20 rounded-[18px] bg-linear-to-b from-[#7a80f3] to-[#545ce8] flex items-center justify-center"><svg class="w-[58px] h-[58px]"><use href="#discord"/></svg></div><div class="absolute left-[35px] top-[97px] size-2 rounded-full bg-black"></div></div>
    <svg viewBox="0 0 80 80" class="size-20"><rect width="80" height="80" rx="18" fill="#fff"/><path d="M18 58A28 28 0 1 1 62 58L49 38l-2 4-7-12-7 12-2-3z" fill="#445ef5"/></svg>
    <div class="relative size-20"><svg viewBox="0 0 80 80" class="size-20"><g clip-path="url(#sq)"><rect width="80" height="80" fill="#f1f0ed"/><rect width="80" height="20" fill="#f7cf49"/><path d="M0 21h80" stroke="#b9a36a" stroke-width="2"/><path d="M0 24.500h80" stroke="#aaa" stroke-width="2" stroke-dasharray="1.500 2.500"/><path d="M0 40h80M0 60h80" stroke="#cfcdca" stroke-width="2"/></g></svg><div class="absolute left-[35px] top-[97px] size-2 rounded-full bg-black"></div></div>
    <svg viewBox="0 0 80 80" class="size-20"><defs><linearGradient id="as" x2="0" y2="1"><stop stop-color="#4daaf0"/><stop offset="1" stop-color="#2457d6"/></linearGradient></defs><rect width="80" height="80" rx="18" fill="url(#as)"/><g stroke="#fff" stroke-width="6.500" stroke-linecap="round"><path d="M43 18L28 46M22 57l-2 4M37 18l24 43M15 49h27M54 49h11"/></g></svg>
    <svg viewBox="0 0 80 80" class="size-20"><defs><linearGradient id="ms" x2="0" y2="1"><stop stop-color="#85f07c"/><stop offset="1" stop-color="#56bf44"/></linearGradient><radialGradient id="mb" cx=".65" cy=".7"><stop stop-color="#cfe3cb"/><stop offset="1" stop-color="#fff"/></radialGradient></defs><rect width="80" height="80" rx="18" fill="url(#ms)"/><path d="M40 14c17 0 29 10 29 24S57 62 40 62c-3 0-6 0-9-1-2 3-6 5-10 5 3-3 4-5 3-8-8-5-13-12-13-20 0-14 12-24 29-24z" fill="url(#mb)"/></svg>
    <div class="size-20 rounded-[18px] overflow-hidden bg-[#fbfbfb] flex flex-col items-center"><div class="w-full h-[25px] bg-[#e4584d] text-white text-[16px] font-semibold leading-[27px] text-center">JUN</div><div class="text-[50px] leading-[50px] tracking-[-2px] -ml-1 font-light text-[#222]">18</div></div>
    <div class="relative size-20"><svg viewBox="0 0 80 80" class="size-20"><defs><linearGradient id="st" x2="0" y2="1"><stop stop-color="#cfdce3"/><stop offset="1" stop-color="#8e8d8c"/></linearGradient></defs><rect width="80" height="80" rx="18" fill="url(#st)"/><circle cx="40" cy="40" r="31" fill="#8d9296" stroke="#33383b" stroke-width="7" stroke-dasharray="2.200 1.200"/><circle cx="40" cy="40" r="26" fill="#40464a" stroke="#9ba1a5" stroke-width="4"/><circle cx="40" cy="40" r="13" fill="none" stroke="#8e9498" stroke-width="3.500"/><path d="M40 40h26M40 40L27 18M40 40L27 62" stroke="#a3a9ad" stroke-width="4"/></svg><div class="absolute left-[55px] top-[-9px] size-[38px] rounded-full bg-[#e8513f] text-white text-[23px] leading-[38px] text-center">1</div></div>
  </div>
  <div class="w-[2px] h-[96px] bg-[#5a4c57] ml-[37px] -mt-[3px]"></div>
  <div class="flex gap-[26px] ml-[35px]">
    <div class="relative size-20"><svg viewBox="0 0 80 80" class="size-20"><rect y="10" width="80" height="70" rx="16" fill="#d9c566"/><path d="M16 0h48q16 0 16 16v36q-4 18-20 20H18Q2 72 1 56L0 16Q0 0 16 0z" fill="#faee95"/><path d="M80 50q-4 22-24 22 14-4 14-16 8 0 10-6z" fill="#e2cd68"/><path d="M15 26q6-16 7-10t2 10q4-8 6-6t2 6l8-2 4-1h23M15 38h52M15 52h28" fill="none" stroke="#d9c866" stroke-width="4"/></svg><div class="absolute left-[34px] top-[97px] size-2 rounded-full bg-black"></div></div>
    <svg viewBox="0 0 80 80" class="size-20 overflow-visible"><rect width="80" height="80" rx="18" fill="#fdfdfd"/><path d="M0 22h80M0 31h80M0 41h80M0 50h80M0 60h80M0 69h80" stroke="#c9c9c9" stroke-width="1.400"/><path d="M14 0v80" stroke="#efc6c6" stroke-width="1.400"/><path d="M71-8l6 2L42 64l-10 20 3-23z" fill="#a9bccb" stroke="#5f7486" stroke-width="1.500"/><path d="M73 0L44 56" stroke="#e6eef4" stroke-width="2"/></svg>
    <svg viewBox="0 0 80 80" class="size-20 overflow-visible"><rect width="80" height="80" rx="18" fill="#f2f2f2"/><g clip-path="url(#sq)" transform="translate(6 6) scale(.85)"><rect width="80" height="80" fill="#a5c2ef"/><rect y="44" width="80" height="14" fill="#1f3d73"/><rect y="54" width="80" height="26" fill="#7d8f9d"/><path d="M0 62q14-10 26-2t24-4v10H0z" fill="#eef2f4"/><path d="M4 80q20-14 40 0z" fill="#6b5638"/></g><path d="M42 56h32l6 22q-1 6-8 6H42q-7 0-8-6z" fill="#dfe4e6" fill-opacity=".9" stroke="#83898c" stroke-width="2"/><path d="M50 62l10-4 6 14-12 4z" fill="#8b99a3"/><rect x="40" y="39" width="36" height="17" rx="5" fill="#151515"/></svg>
  </div>
  <div class="w-[2px] h-[96px] bg-[#5a4c57] ml-[37px] -mt-[3px]"></div>
  <svg viewBox="0 0 84 78" class="w-[84px] h-[78px] ml-[33px]"><path d="M10 0h50l4 8H10z" fill="#eee"/><path d="M5 5h75v8H5z" fill="#1b1b1b"/><path d="M0 11h84v67H0z" fill="#050505"/><path d="M0 20h84v26l-6-2-8 3-8-4-6 3-8-7-8 9-6 2-14 4-20 14z" fill="#cd855c"/><path d="M0 11h84v9H0z" fill="#2c2c2c"/><path d="M34 46V22M54 44V26M50 42V22M38 42l8-12" stroke="#0c0807" stroke-width="2"/><circle cx="56" cy="40" r="3" fill="#ffd28a"/></svg>
  <div class="relative w-[93px] h-[53px] ml-[18px] mt-[14px] bg-[#17181c] border border-[#2a2b30]">
    <svg viewBox="0 0 92 52" class="w-[92px] h-[52px]" stroke-width="1.500" fill="none"><path d="M2 4v30" stroke="#8a4a55" stroke-width="2" stroke-dasharray="2 2"/><path d="M9 6h14M9 12h16M9 18h12M9 24h16M9 30h14M9 36h16M9 44h10" stroke="#4d4f56" stroke-dasharray="5 2"/><path d="M32 8h36M32 12h34M32 18h36M32 21h30M32 30h12M32 38h20M32 46h30" stroke="#5d5f66" stroke-dasharray="9 1 4 1"/><path d="M76 8h12M76 14h10M76 20h12M76 28h10M76 34h12" stroke="#3e4a66"/></svg>
    <div class="absolute left-[59px] top-[39px] size-[30px] rounded-[7px] bg-[#5f68ec] flex items-center justify-center"><svg class="size-[22px]"><use href="#discord"/></svg></div>
  </div>
  <svg viewBox="0 0 70 92" class="w-[70px] h-[92px] ml-[24px] -mt-[7px]"><defs><linearGradient id="tr"><stop stop-color="#d4d4d4"/><stop offset=".4" stop-color="#f3f3f3"/><stop offset="1" stop-color="#cdcdcd"/></linearGradient></defs><path d="M0 14l8 68q2 10 27 10t27-10l8-68z" fill="url(#tr)"/><ellipse cx="35" cy="14" rx="34" ry="8" fill="#a9a9a9" stroke="#ececec" stroke-width="2"/><path d="M6 12l14-8 6 6L42 1l8 8 10-1 4 7-14 6-18-2-16 3z" fill="#ededed" stroke="#777"/><path d="M24 12l6-3 3 8zM42 8l8 8-8 3z" fill="#4f6f92"/><path d="M34 14l5 2-2 4z" fill="#d08b52"/></svg>
</div>
</body>
</html>
